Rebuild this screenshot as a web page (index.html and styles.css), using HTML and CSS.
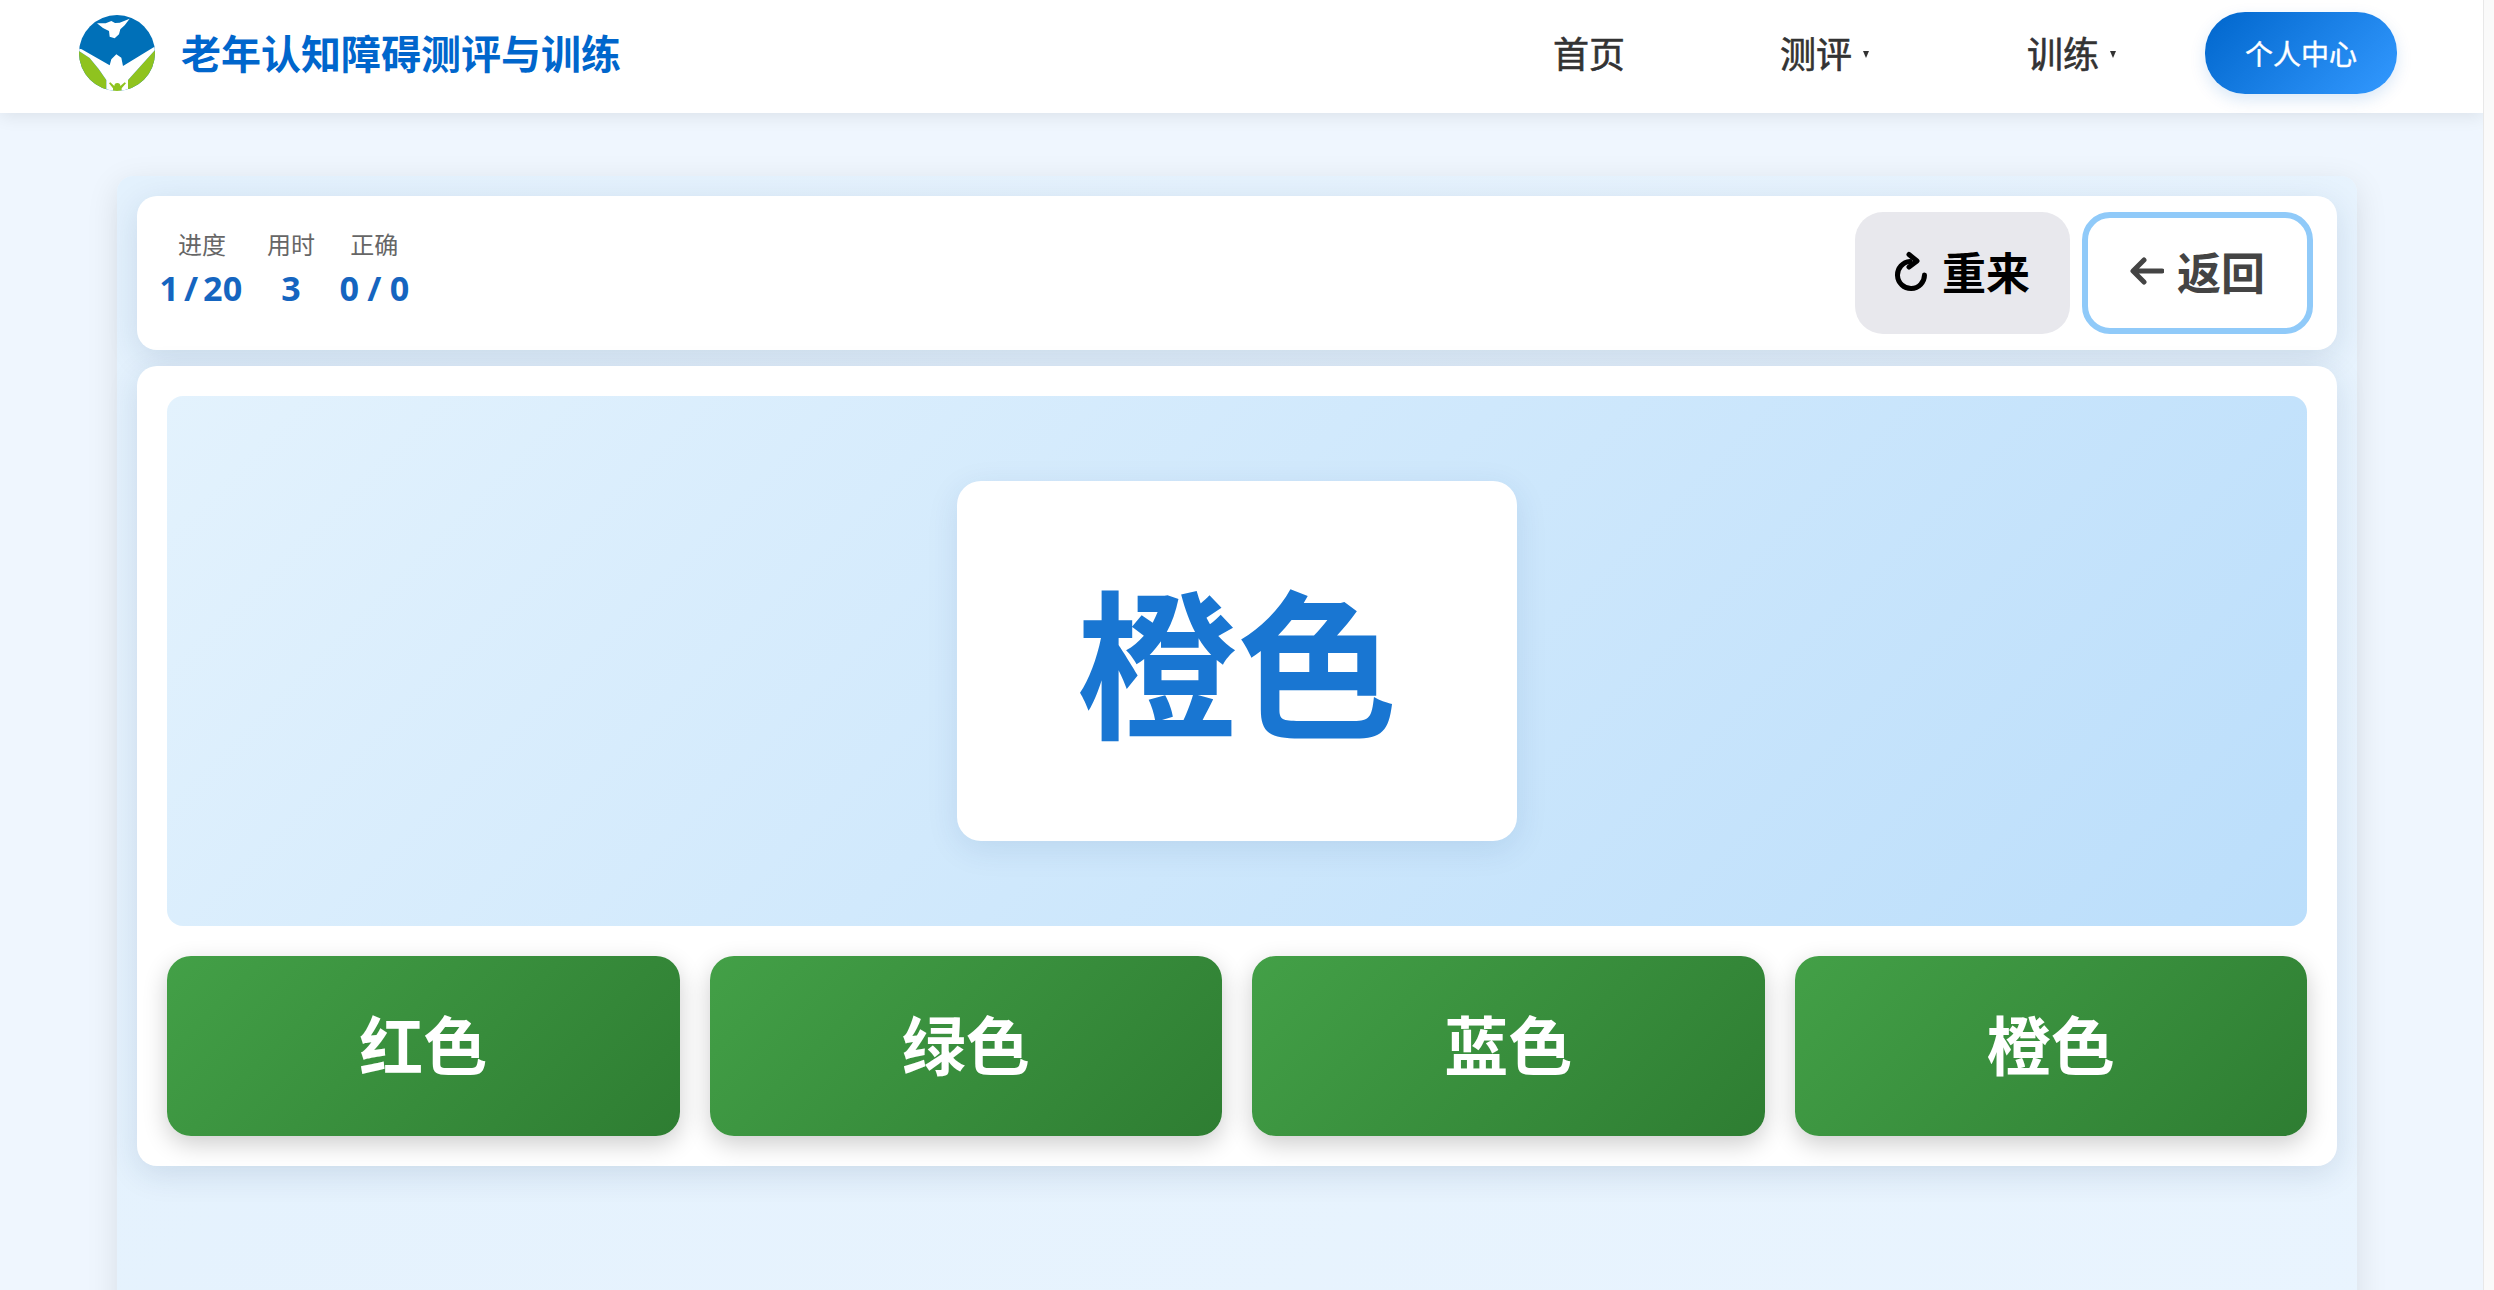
FILE: index.html
```html
<!DOCTYPE html>
<html lang="zh-CN">
<head>
  <meta charset="UTF-8">
  <meta name="viewport" content="width=device-width, initial-scale=1">
  <link rel="stylesheet" href="styles.css">
  <title>老年认知障碍测评与训练</title>
</head>
<body>
  <div class="page">
    <header class="navbar">
      <svg class="logo" viewBox="28 27 228 228" aria-hidden="true">
        <defs>
          <clipPath id="logoClip"><circle cx="142" cy="141" r="114"/></clipPath>
        </defs>
        <g clip-path="url(#logoClip)">
          <rect x="20" y="20" width="245" height="245" fill="#0070b8"/>
          <path d="M20 130 L60 156 Q90 190 110 222 L110 265 L20 265 Z" fill="#8fc31f"/>
          <path d="M265 122 L175 222 L175 265 L265 265 Z" fill="#8fc31f"/>
          <path d="M20 126 L36 130 L120 178 L125 160 L140 145 L155 155 L160 180 L252 124 L265 122 L175 222 L175 265 L110 265 L110 222 Q90 190 60 156 L20 130 Z" fill="#fff"/>
          <path d="M118 232 L122 229 L134 240 A9 9 0 1 1 152 240 L165 229 L169 232 L156 247 L156 265 L130 265 L130 247 Z" fill="#8fc31f"/>
          <path d="M82 52 L108 52 L125 45 L136 51 L150 50 L180 38 L165 58 L152 70 L148 85 L135 97 L120 92 L118 75 L100 66 Z" fill="#fff"/>
        </g>
      </svg>
      <span class="brand">老年认知障碍测评与训练</span>
      <nav class="nav-links">
        <a class="nav-link">首页</a>
        <a class="nav-link">测评<span class="caret"></span></a>
        <a class="nav-link">训练<span class="caret"></span></a>
      </nav>
      <button class="profile-btn">个人中心</button>
    </header>

    <main class="game-panel">
      <section class="toolbar">
        <div class="stats">
          <div class="stat"><span class="stat-label">进度</span><span class="stat-value tight">1 / 20</span></div>
          <div class="stat"><span class="stat-label">用时</span><span class="stat-value">3</span></div>
          <div class="stat"><span class="stat-label">正确</span><span class="stat-value">0 / 0</span></div>
        </div>
        <div class="actions">
          <button class="action-btn restart">
            <svg class="btn-icon" viewBox="0 0 34 40" aria-hidden="true">
              <path d="M29.5 24 A13.5 13.5 0 1 1 15 10.5" fill="none" stroke="#000" stroke-width="5" stroke-linecap="round"/>
              <path d="M14 3.5 L22 10 L14 16" fill="none" stroke="#000" stroke-width="5" stroke-linecap="round" stroke-linejoin="round"/>
            </svg>
            重来
          </button>
          <button class="action-btn back">
            <svg class="btn-icon" viewBox="0 0 34 40" aria-hidden="true">
              <path d="M32 20 H4 M14 9 L3 20 L14 31" fill="none" stroke="#444" stroke-width="5" stroke-linecap="round" stroke-linejoin="round"/>
            </svg>
            返回
          </button>
        </div>
      </section>

      <section class="board">
        <div class="stage">
          <div class="word-card">橙色</div>
        </div>
        <div class="options">
          <button class="option">红色</button>
          <button class="option">绿色</button>
          <button class="option">蓝色</button>
          <button class="option">橙色</button>
        </div>
      </section>
    </main>
  </div>
  <div class="scroll-track"></div>
</body>
</html>
```

FILE: styles.css
```css
* {
  margin: 0;
  padding: 0;
  box-sizing: border-box;
}
body {
  display: flex;
  height: 100vh;
  overflow: hidden;
  font-family: "Noto Sans", "Noto Sans CJK SC", sans-serif;
}
button {
  font-family: inherit;
  border: none;
}
.page {
  flex: 1;
  min-width: 0;
  height: 100%;
  overflow: hidden;
  background: #eff6fe;
}
.scroll-track {
  width: 11px;
  background: #fafafa;
  border-left: 1px solid #e8e8e8;
}
.navbar {
  position: relative;
  z-index: 2;
  display: flex;
  align-items: center;
  height: 113px;
  padding: 0 86px 7px 79px;
  background: #fff;
  box-shadow: 0 4px 16px rgba(0, 0, 0, 0.08);
}
.logo {
  width: 76px;
  height: 76px;
}
.brand {
  margin-left: 26px;
  padding-bottom: 2px;
  font-family: "Noto Sans CJK SC", sans-serif;
  font-size: 40px;
  font-weight: 700;
  color: #0066cc;
}
.nav-links {
  display: flex;
  gap: 155px;
  margin-left: auto;
  margin-right: 86px;
}
.nav-link {
  display: flex;
  align-items: center;
  padding-bottom: 2px;
  font-family: "Noto Sans CJK SC", sans-serif;
  font-size: 36px;
  color: #333;
  -webkit-text-stroke: 0.6px #333;
}
.caret {
  width: 0;
  height: 0;
  margin: 4px 3px 0 11px;
  border-left: 3px solid transparent;
  border-right: 3px solid transparent;
  border-top: 7px solid #333;
}
.profile-btn {
  width: 192px;
  height: 82px;
  border-radius: 40px;
  font-family: "Noto Sans CJK SC", sans-serif;
  font-size: 28px;
  color: #fff;
  -webkit-text-stroke: 0.4px #fff;
  background: linear-gradient(135deg, #0066cc, #3399ff);
  box-shadow: 0 6px 16px rgba(0, 102, 204, 0.15);
}

.game-panel {
  width: 2240px;
  height: 1200px;
  margin: 63px 0 0 117px;
  padding: 20px 20px 0;
  background: linear-gradient(135deg, #e3f1fd, #e9f4fe);
  border-radius: 16px 16px 0 0;
  box-shadow: 0 8px 32px rgba(0, 0, 0, 0.1);
}
.toolbar {
  display: flex;
  align-items: center;
  justify-content: space-between;
  height: 154px;
  padding: 0 24px;
  background: #fff;
  border-radius: 20px;
  box-shadow: 0 8px 32px rgba(0, 50, 90, 0.12);
}
.stats {
  display: flex;
  gap: 24px;
  margin-bottom: 10px;
}
.stat {
  display: flex;
  flex-direction: column;
  align-items: center;
}
.stat-label {
  margin-bottom: 4px;
  font-family: "Noto Sans CJK SC", sans-serif;
  font-size: 24px;
  line-height: 36px;
  color: #666;
}
.stat-value {
  font-size: 34px;
  line-height: 44px;
  font-weight: 700;
  font-variant-numeric: proportional-nums;
  word-spacing: -1px;
  color: #1565c0;
  white-space: pre;
}
.tight {
  word-spacing: -3.5px;
}
.actions {
  display: flex;
  gap: 12px;
}
.action-btn {
  display: flex;
  align-items: center;
  justify-content: center;
  gap: 13px;
  height: 122px;
  padding-bottom: 4px;
  border-radius: 28px;
  font-family: "Noto Sans CJK SC", sans-serif;
  font-size: 44px;
  font-weight: 700;
}
.btn-icon {
  width: 34px;
  height: 40px;
}
.restart {
  width: 215px;
  color: #000;
  background: #e8e8ed;
}
.back {
  width: 231px;
  color: #444;
  background: #fff;
  border: 6px solid #90caf9;
}

.board {
  margin-top: 16px;
  padding: 30px;
  background: #fff;
  border-radius: 20px;
  box-shadow: 0 8px 32px rgba(0, 50, 90, 0.12);
}
.stage {
  display: flex;
  align-items: center;
  justify-content: center;
  height: 530px;
  background: linear-gradient(135deg, #e3f2fd, #bbdefb);
  border-radius: 16px;
}
.word-card {
  display: flex;
  align-items: center;
  justify-content: center;
  width: 560px;
  height: 360px;
  padding-bottom: 8px;
  font-family: "Noto Sans CJK SC", sans-serif;
  font-size: 160px;
  font-weight: 700;
  color: #1976d2;
  background: #fff;
  border-radius: 24px;
  box-shadow: 0 8px 32px rgba(0, 60, 120, 0.1);
}
.options {
  display: grid;
  grid-template-columns: repeat(4, 1fr);
  gap: 30px;
  margin-top: 30px;
}
.option {
  height: 180px;
  padding-bottom: 8px;
  border-radius: 24px;
  font-family: "Noto Sans CJK SC", sans-serif;
  font-size: 64px;
  font-weight: 700;
  color: #fff;
  background: linear-gradient(135deg, #43a047, #2e7d32);
  box-shadow: 0 8px 24px rgba(0, 0, 0, 0.2);
}
```
